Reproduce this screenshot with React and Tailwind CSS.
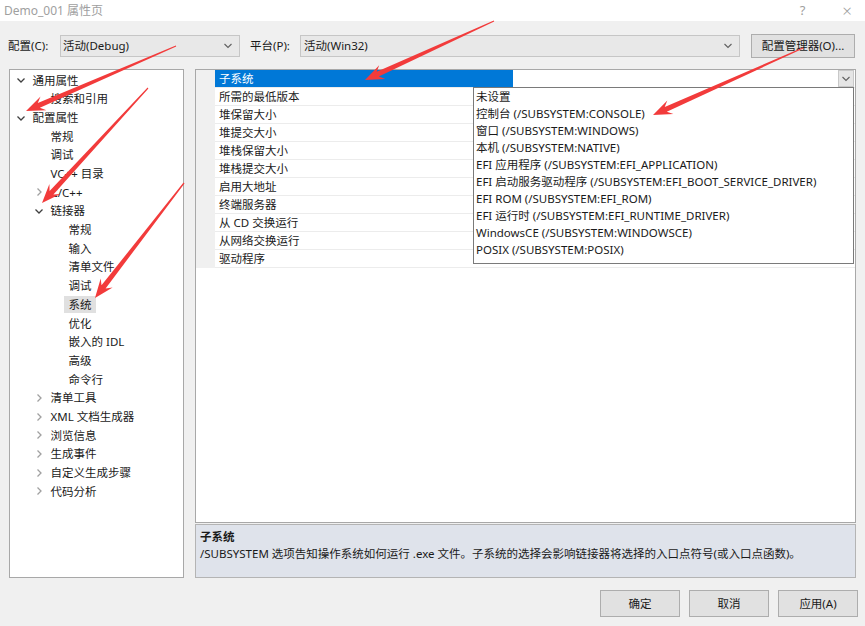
import React from 'react';

const tree = [
  { l: 0, t: '通用属性', c: 'open' },
  { l: 1, t: '搜索和引用' },
  { l: 0, t: '配置属性', c: 'open' },
  { l: 1, t: '常规' },
  { l: 1, t: '调试' },
  { l: 1, t: 'VC++ 目录' },
  { l: 1, t: 'C/C++', c: 'closed' },
  { l: 1, t: '链接器', c: 'open' },
  { l: 2, t: '常规' },
  { l: 2, t: '输入' },
  { l: 2, t: '清单文件' },
  { l: 2, t: '调试' },
  { l: 2, t: '系统', sel: true },
  { l: 2, t: '优化' },
  { l: 2, t: '嵌入的 IDL' },
  { l: 2, t: '高级' },
  { l: 2, t: '命令行' },
  { l: 1, t: '清单工具', c: 'closed' },
  { l: 1, t: 'XML 文档生成器', c: 'closed' },
  { l: 1, t: '浏览信息', c: 'closed' },
  { l: 1, t: '生成事件', c: 'closed' },
  { l: 1, t: '自定义生成步骤', c: 'closed' },
  { l: 1, t: '代码分析', c: 'closed' },
];

const indent = ['pl-[2px]', 'pl-[20px]', 'pl-[38px]'];

const props = [
  '子系统',
  '所需的最低版本',
  '堆保留大小',
  '堆提交大小',
  '堆栈保留大小',
  '堆栈提交大小',
  '启用大地址',
  '终端服务器',
  '从 CD 交换运行',
  '从网络交换运行',
  '驱动程序',
];

const options = [
  '未设置',
  '控制台 (/SUBSYSTEM:CONSOLE)',
  '窗口 (/SUBSYSTEM:WINDOWS)',
  '本机 (/SUBSYSTEM:NATIVE)',
  'EFI 应用程序 (/SUBSYSTEM:EFI_APPLICATION)',
  'EFI 启动服务驱动程序 (/SUBSYSTEM:EFI_BOOT_SERVICE_DRIVER)',
  'EFI ROM (/SUBSYSTEM:EFI_ROM)',
  'EFI 运行时 (/SUBSYSTEM:EFI_RUNTIME_DRIVER)',
  'WindowsCE (/SUBSYSTEM:WINDOWSCE)',
  'POSIX (/SUBSYSTEM:POSIX)',
];

// red annotation arrows: [tailX, tailY, tipX, tipY]
const arrows = [
  [176, 46, 26, 111],
  [148, 88, 42, 203],
  [184, 183, 95, 298],
  [494, 21, 365, 80],
  [803, 48, 653, 115],
];

function arrowPoints([x1, y1, x2, y2]) {
  const dx = x2 - x1, dy = y2 - y1;
  const L = Math.hypot(dx, dy);
  const ux = dx / L, uy = dy / L, nx = -uy, ny = ux;
  const H = 19, W = 7.5, neck = 14, s = 2.6, t = 0.6;
  const bx = x2 - ux * H, by = y2 - uy * H;
  const kx = x2 - ux * neck, ky = y2 - uy * neck;
  return [
    [x1 + nx * t, y1 + ny * t],
    [kx + nx * s, ky + ny * s],
    [bx + nx * W, by + ny * W],
    [x2, y2],
    [bx - nx * W, by - ny * W],
    [kx - nx * s, ky - ny * s],
    [x1 - nx * t, y1 - ny * t],
  ].map(p => p.map(v => v.toFixed(1)).join(',')).join(' ');
}

function Chevron({ open }) {
  return open ? (
    <svg width="10" height="10" viewBox="0 0 10 10">
      <path d="M1.5 3.5 L5 7 L8.5 3.5" fill="none" stroke="#404040" strokeWidth="1.3" />
    </svg>
  ) : (
    <svg width="10" height="10" viewBox="0 0 10 10">
      <path d="M3.5 1.5 L7 5 L3.5 8.5" fill="none" stroke="#a0a0a0" strokeWidth="1.3" />
    </svg>
  );
}

function ComboArrow() {
  return (
    <svg width="10" height="8" viewBox="0 0 10 8">
      <path d="M1.5 2 L5 5.5 L8.5 2" fill="none" stroke="#606060" strokeWidth="1.1" />
    </svg>
  );
}

export default function App() {
  return (
    <div className="relative w-[865px] h-[626px] bg-[#f0f0f0] overflow-hidden font-['Noto_Sans','Noto_Sans_CJK_SC',sans-serif] text-[11.5px] text-[#1a1a1a] leading-none">
      {/* title bar */}
      <div className="h-[21px] bg-white flex items-center pl-[4px] text-[12px] text-[#a0a0a0]">
        <span>Demo_001 属性页</span>
        <span className="ml-auto mr-[37px] text-[13px]">?</span>
        <span className="mr-[13px] text-[17px] font-light">×</span>
      </div>

      {/* configuration row */}
      <div className="flex items-center h-[24px] mt-[13px] pl-[8px]">
        <span className="w-[52px]">配置(C):</span>
        <div className="w-[180px] h-[22px] bg-[#e8e8e8] border border-[#c6c6c6] flex items-center pl-[2px] pr-[6px]">
          <span>活动(Debug)</span>
          <span className="ml-auto"><ComboArrow /></span>
        </div>
        <span className="w-[50px] ml-[10px]">平台(P):</span>
        <div className="w-[440px] h-[22px] bg-[#e8e8e8] border border-[#c6c6c6] flex items-center pl-[3px] pr-[6px]">
          <span>活动(Win32)</span>
          <span className="ml-auto"><ComboArrow /></span>
        </div>
        <div className="ml-[11px] w-[104px] h-[24px] bg-[#e1e1e1] border border-[#adadad] flex items-center justify-center">
          配置管理器(O)...
        </div>
      </div>

      {/* main area */}
      <div className="flex mt-[11px] pl-[9px] h-[509px]">
        {/* tree */}
        <div className="w-[175px] h-full bg-white border border-[#a8a8a8] pt-px">
          {tree.map((n, i) => (
            <div key={i} className={`flex items-center h-[18.7px] ${indent[n.l]}`}>
              <span className="w-[18px] flex justify-center">
                {n.c && <Chevron open={n.c === 'open'} />}
              </span>
              <span className={n.sel ? 'ml-[-2px] px-[4.5px] h-[17px] flex items-center bg-[#e0e0e0]' : 'ml-[2.5px]'}>
                {n.t}
              </span>
            </div>
          ))}
        </div>

        {/* property pages */}
        <div className="ml-[11px] w-[661px] h-full flex flex-col">
          <div className="relative h-[454px] bg-white border border-[#a8a8a8]">
            {props.map((p, i) => (
              <div key={i} className="flex h-[18px]">
                <div className="w-[19px] bg-[#f0f0f0]" />
                <div className={`w-[298px] flex items-center pl-[4px] border-b border-[#ececec] ${i === 0 ? 'bg-[#0078d7] text-white border-[#0078d7]' : ''}`}>
                  {p}
                </div>
                <div className="flex-1 flex items-center border-b border-[#ececec]">
                  {i === 0 && (
                    <div className="ml-auto mr-px w-[16px] h-[17px] bg-[#e5e5e5] border border-[#c8c8c8] flex items-center justify-center">
                      <ComboArrow />
                    </div>
                  )}
                </div>
              </div>
            ))}

            {/* open dropdown list */}
            <div className="absolute left-[277px] top-[17px] w-[381px] h-[177px] bg-white border border-[#7a7a7a] pl-[2px]">
              {options.map((o, i) => (
                <div key={i} className="h-[17px] flex items-center whitespace-nowrap">{o}</div>
              ))}
            </div>
          </div>

          {/* description */}
          <div className="flex-1 mt-[1px] bg-[#dfe3eb] border border-[#b4b4b4] px-[4px] pt-[6px]">
            <div className="font-bold">子系统</div>
            <div className="mt-[5px] whitespace-nowrap">
              /SUBSYSTEM 选项告知操作系统如何运行 .exe 文件。子系统的选择会影响链接器将选择的入口点符号(或入口点函数)。
            </div>
          </div>
        </div>
      </div>

      {/* dialog buttons */}
      <div className="flex justify-end gap-[9px] pr-[7px] mt-[12px]">
        {['确定', '取消', '应用(A)'].map(b => (
          <div key={b} className="w-[80px] h-[27px] bg-[#e1e1e1] border border-[#adadad] flex items-center justify-center">
            {b}
          </div>
        ))}
      </div>

      {/* annotation arrows */}
      <svg className="absolute inset-0 pointer-events-none" width="865" height="626">
        {arrows.map((a, i) => (
          <polygon key={i} points={arrowPoints(a)} fill="#f23b3b" />
        ))}
      </svg>
    </div>
  );
}
